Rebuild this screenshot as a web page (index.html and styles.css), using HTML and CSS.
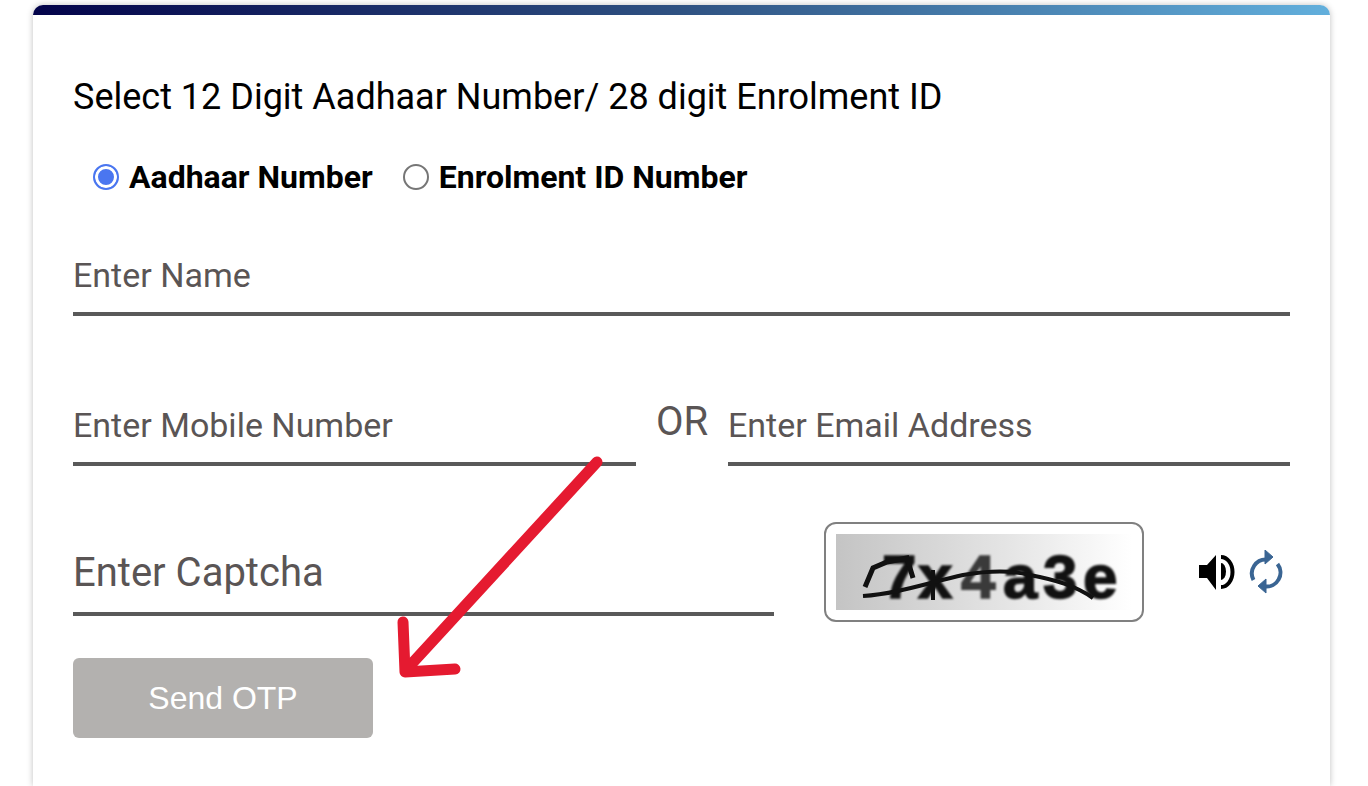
FILE: index.html
```html
<!DOCTYPE html>
<html lang="en">
<head>
    <meta charset="UTF-8">
    <meta name="viewport" content="width=device-width, initial-scale=1.0">
    <title>Retrieve Aadhaar</title>
    <link rel="stylesheet" href="styles.css">
</head>
<body>
    <div class="card">
        <h2 class="title">Select 12 Digit Aadhaar Number/ 28 digit Enrolment ID</h2>

        <div class="radio-row">
            <label class="radio-item"><span class="radio checked"></span>Aadhaar Number</label>
            <label class="radio-item"><span class="radio"></span>Enrolment ID Number</label>
        </div>

        <div class="row row-name">
            <input class="field" type="text" placeholder="Enter Name">
        </div>

        <div class="row row-contact">
            <input class="field" type="text" placeholder="Enter Mobile Number">
            <span class="or">OR</span>
            <input class="field" type="text" placeholder="Enter Email Address">
        </div>

        <div class="row row-captcha">
            <input class="field field-large" type="text" placeholder="Enter Captcha">
            <div class="captcha-box">
                <div class="captcha-img">
                    <span class="captcha-text"><span class="c1">7</span><span class="c2">x</span><span class="c3">4</span><span class="c4">a</span><span class="c5">3</span><span class="c6">e</span></span>
                    <svg class="captcha-lines" viewBox="0 0 296 76">
                        <path d="M27 62 C60 60 95 48 127 41 C150 37 175 36 194 41 C220 46 240 52 257 64" fill="none" stroke="#111" stroke-width="4"/>
                        <path d="M29 53 L37 34 L51 28 L71 24 L77 44" fill="none" stroke="#111" stroke-width="5"/>
                        <path d="M97 36 V66" fill="none" stroke="#111" stroke-width="4"/>
                    </svg>
                </div>
            </div>
            <div class="captcha-icons">
                <svg class="icon-sound" viewBox="0 0 38 36">
                    <path d="M0 11 H8 L17 1 V36 L8 24 H0 Z" fill="#000"/>
                    <path d="M22 9 A5 8.500 0 0 1 22 26 Z" fill="#000"/>
                    <path d="M22 3 A11.500 15 0 0 1 22 33" fill="none" stroke="#000" stroke-width="4"/>
                </svg>
                <svg class="icon-refresh" viewBox="0 0 34 44">
                    <path d="M18 9.5 A14 14 0 0 0 4.500 30" fill="none" stroke="#3a6593" stroke-width="4"/>
                    <path d="M16 14 L16 0 L24 7 Z" fill="#3a6593" stroke="#3a6593" stroke-width="1" stroke-linejoin="round"/>
                    <path d="M28.500 14 A14 14 0 0 1 16 36.500" fill="none" stroke="#3a6593" stroke-width="4"/>
                    <path d="M17 29 L17 43 L9 36 Z" fill="#3a6593" stroke="#3a6593" stroke-width="1" stroke-linejoin="round"/>
                </svg>
            </div>
        </div>

        <button class="btn" disabled>Send OTP</button>
    </div>

    <!-- red annotation arrow drawn on top of the form -->
    <svg class="arrow" viewBox="0 0 220 240">
        <path d="M207 12 L16 220" fill="none" stroke="#e51a30" stroke-width="11" stroke-linecap="round"/>
        <path d="M13 172 L15 222 L65 219" fill="none" stroke="#e51a30" stroke-width="11" stroke-linecap="round" stroke-linejoin="round"/>
    </svg>
</body>
</html>
```

FILE: styles.css
```css
:root {
    --line: #595959;
    --hint: #5a5555;
}

* {
    margin: 0;
    padding: 0;
    box-sizing: border-box;
    font-family: Roboto, 'Liberation Sans', sans-serif;
}

html, body {
    height: 786px;
    overflow: hidden;
    background: #fff;
}

body {
    padding: 5px 38px 0 33px;
}

.card {
    height: 781px;
    padding: 0 40px;
    border-radius: 10px 10px 0 0;
    border-top: 10px solid transparent;
    background:
        linear-gradient(#fff, #fff) padding-box,
        linear-gradient(90deg, #03034a 0%, #2f5282 50%, #62afdc 100%) border-box;
    box-shadow: 0 0 6px rgba(0, 0, 0, 0.25);
}

.title {
    padding-top: 60px;
    font-size: 36px;
    line-height: 44px;
    font-weight: 400;
    color: #000;
}

.radio-row {
    display: flex;
    gap: 30px;
    margin-top: 38px;
    padding-left: 20px;
}

.radio-item {
    display: flex;
    align-items: center;
    gap: 10px;
    font-size: 32px;
    line-height: 40px;
    font-weight: 700;
    color: #000;
}

.radio {
    width: 26px;
    height: 26px;
    border: 2px solid #767676;
    border-radius: 50%;
    background: #fff;
}

.radio.checked {
    border-color: #4a76f0;
    background: #4a76f0;
    box-shadow: inset 0 0 0 3px #fff;
}

.row {
    display: flex;
    width: 1217px;
}

.row-name {
    margin-top: 59px;
}

.row-contact {
    margin-top: 90px;
}

.row-contact .field {
    flex: none;
    width: 563px;
}

.row-contact .field:last-child {
    width: 562px;
}

.row-captcha {
    align-items: flex-start;
    margin-top: 56px;
}

.field {
    width: 100%;
    height: 60px;
    padding-bottom: 18px;
    border: none;
    border-bottom: 4px solid var(--line);
    outline: none;
    background: transparent;
    font-size: 34px;
    color: var(--hint);
}

.field::placeholder {
    color: var(--hint);
    opacity: 1;
}

.field-large {
    flex: none;
    width: 701px;
    height: 94px;
    padding-top: 10px;
    padding-bottom: 0;
    font-size: 40px;
}

.or {
    flex: none;
    width: 92px;
    margin-top: -8px;
    text-align: center;
    font-size: 40px;
    line-height: 48px;
    color: var(--hint);
}

.captcha-box {
    flex: none;
    width: 320px;
    height: 100px;
    margin-left: 50px;
    padding: 10px;
    border: 2px solid #808080;
    border-radius: 12px;
}

.captcha-img {
    position: relative;
    width: 296px;
    height: 76px;
    overflow: hidden;
    background: linear-gradient(90deg, #c4c4c4 0%, #e6e6e6 60%, #fff 100%);
}

.captcha-text {
    display: block;
    padding: 11px 0 0 46px;
    white-space: nowrap;
    font-size: 62px;
    line-height: 64px;
    color: #111;
    -webkit-text-stroke: 1.5px #111;
    filter: blur(0.8px);
}

.captcha-text span {
    display: inline-block;
    font-family: 'Liberation Sans', sans-serif;
    font-weight: 700;
}

.c1 { width: 36px; }
.c2 { width: 43px; }
.c3 { width: 42px; opacity: 0.8; }
.c4 { width: 40px; }
.c5 { width: 40px; }
.c6 { width: 34px; }

.captcha-lines {
    position: absolute;
    left: 0;
    top: 0;
    width: 296px;
    height: 76px;
    filter: blur(0.5px);
}

.captcha-icons {
    display: flex;
    align-items: center;
    gap: 12px;
    height: 100px;
    margin-left: 55px;
}

.icon-sound {
    width: 38px;
    height: 36px;
}

.icon-refresh {
    width: 34px;
    height: 44px;
}

.btn {
    display: block;
    width: 300px;
    height: 80px;
    margin-top: 36px;
    border: none;
    border-radius: 6px;
    background: #b3b1af;
    color: #fff;
    font-family: 'Liberation Sans', sans-serif;
    font-size: 32px;
}

.arrow {
    position: absolute;
    left: 390px;
    top: 450px;
    width: 220px;
    height: 240px;
}
```
